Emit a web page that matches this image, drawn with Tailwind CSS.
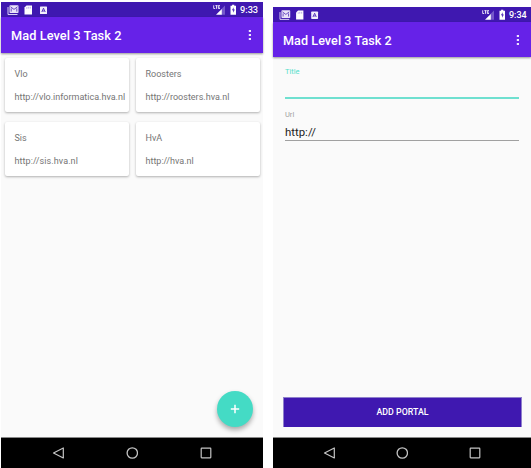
<!DOCTYPE html>
<html lang="en">
<head>
<meta charset="utf-8">
<title>Mad Level 3 Task 2</title>
<script src="https://cdn.jsdelivr.net/npm/@tailwindcss/browser@4"></script>
</head>
<body class="bg-white font-['Roboto',sans-serif] w-[531px] h-[468px] overflow-hidden">
<svg class="hidden">
  <symbol id="notif" viewBox="0 0 42 12">
    <path d="M1 3v7.500h9.500" fill="none" stroke="#d9cff3" stroke-width="1"/>
    <rect x="2.500" y="1.200" width="9" height="7.800" rx=".8" fill="#e9e3f8"/>
    <path d="M3.500 2.800l3.500 2.600 3.500-2.600M4.200 7.600V4.400M9.800 7.600V4.400" fill="none" stroke="#4a25b5" stroke-width=".8"/>
    <path d="M19.500 1.500h5.500v9h-7.500v-7z" fill="#fff"/>
    <path d="M19.700 3.300v1.400M21.300 2.800v1.800M23.200 2.800v1.800" stroke="#8f74d4" stroke-width=".6"/>
    <rect x="33" y="2.500" width="7" height="7.500" rx=".6" fill="#f2eefb"/>
    <path d="M34.800 8l1.700-3.800L38.200 8M35.500 7h2" fill="none" stroke="#4a25b5" stroke-width=".9"/>
  </symbol>
  <symbol id="signal" viewBox="0 0 24 12">
    <path d="M.7 1.300v3.200h1.500M2.400 1.600h2.200M3.500 1.600v3.200M7 1.600H5.300v2.900H7M5.300 3.100h1.500" fill="none" stroke="#f2eefb" stroke-width=".9"/>
    <path d="M12 1.500v9.300H8.500V5z" fill="#7558cb"/>
    <path d="M8.800 5v5.800H3z" fill="#fff"/>
    <path d="M17.500 1.700h1.600V.8h2.200v.9H23v9.100h-5.500z" fill="#fff"/>
    <path d="M20.600 3.200l-1.600 3h1.200v2.600l1.600-3.200h-1.200z" fill="#3f17b0"/>
  </symbol>
  <symbol id="back" viewBox="0 0 12 12"><path d="M11.300 1v10L1.500 6z" fill="none" stroke="#c4c4c4" stroke-width="1.200" stroke-linejoin="round"/></symbol>
  <symbol id="home" viewBox="0 0 12 12"><circle cx="6.300" cy="6" r="5.200" fill="none" stroke="#c4c4c4" stroke-width="1.300"/></symbol>
  <symbol id="recent" viewBox="0 0 12 12"><rect x="1.200" y="1.200" width="9.600" height="9.600" rx=".5" fill="none" stroke="#c4c4c4" stroke-width="1.200"/></symbol>
  <symbol id="more" viewBox="0 0 4 12"><path d="M.8.900h2.200v2.200H.8zM.8 4.900h2.200v2.200H.8zM.8 8.900h2.200v2.200H.8z" fill="#ece4fd"/></symbol>
</svg>
<div class="flex">
  <section class="ml-px mt-[2px] w-[262px] h-[466px] bg-[#fafafa] flex flex-col">
    <div class="h-[15px] shrink-0 bg-[#3f18b0] flex items-center pl-[6px] pr-[4px] text-white">
      <svg class="w-[42px] h-[12px]"><use href="#notif"/></svg>
      <svg class="w-[24px] h-[12px] ml-auto"><use href="#signal"/></svg>
      <span class="ml-[3px] w-[19px] text-[9.200px] leading-[15px] font-medium whitespace-nowrap">9:33</span>
    </div>
    <header class="h-[36px] shrink-0 bg-[#6622e8] flex items-center justify-between pl-[10px] pr-[11px] shadow-[0_1px_2px_rgba(0,0,0,.4)]">
      <h1 class="pt-[2px] text-[12.800px] leading-[16px] font-medium text-white whitespace-nowrap tracking-[.06px]">Mad Level 3 Task 2</h1>
      <svg class="w-[4px] h-[12px]"><use href="#more"/></svg>
    </header>
    <main class="relative grow grid grid-cols-[124px_124px] auto-rows-[54px] gap-x-[7px] gap-y-[10px] pt-[5px] pl-[3.500px] text-[9px] leading-[12px] text-[#757575] whitespace-nowrap">
      <article class="bg-white rounded-[2px] shadow-[0_1px_2.500px_rgba(0,0,0,.3)] pt-[10px] pl-[10px] flex flex-col gap-[11px]"><p>Vlo</p><p>http://vlo.informatica.hva.nl</p></article>
      <article class="bg-white rounded-[2px] shadow-[0_1px_2.500px_rgba(0,0,0,.3)] pt-[10px] pl-[10px] flex flex-col gap-[11px]"><p>Roosters</p><p>http://roosters.hva.nl</p></article>
      <article class="bg-white rounded-[2px] shadow-[0_1px_2.500px_rgba(0,0,0,.3)] pt-[10px] pl-[10px] flex flex-col gap-[11px]"><p>Sis</p><p class="tracking-[.08px]">http://sis.hva.nl</p></article>
      <article class="bg-white rounded-[2px] shadow-[0_1px_2.500px_rgba(0,0,0,.3)] pt-[10px] pl-[10px] flex flex-col gap-[11px]"><p>HvA</p><p>http://hva.nl</p></article>
      <button class="absolute right-[10px] bottom-[10px] size-[36px] rounded-full bg-[#44dbc5] shadow-[0_3px_5px_rgba(0,0,0,.32)] flex items-center justify-center" aria-label="Add">
        <svg class="size-[10px]" viewBox="0 0 10 10"><path d="M5 .8v8.400M.8 5h8.400" stroke="#fff" stroke-width="1.500"/></svg>
      </button>
    </main>
    <nav class="h-[31px] shrink-0 bg-black border-t border-[#888] flex items-center justify-between pl-[51px] pr-[51px]">
      <svg class="size-[12px]"><use href="#back"/></svg>
      <svg class="size-[12px]"><use href="#home"/></svg>
      <svg class="size-[12px]"><use href="#recent"/></svg>
    </nav>
  </section>
  <section class="ml-[10px] mt-[7px] w-[258px] h-[461px] bg-[#fafafa] flex flex-col">
    <div class="h-[15px] shrink-0 bg-[#3f18b0] flex items-center pl-[6px] pr-[4px] text-white">
      <svg class="w-[41px] h-[12px]"><use href="#notif"/></svg>
      <svg class="w-[24px] h-[12px] ml-auto"><use href="#signal"/></svg>
      <span class="pt-px ml-[3px] w-[18px] text-[9px] leading-[15px] font-medium whitespace-nowrap">9:34</span>
    </div>
    <header class="h-[35px] shrink-0 bg-[#6622e8] flex items-center justify-between pl-[10px] pr-[11px] shadow-[0_1px_2px_rgba(0,0,0,.4)]">
      <h1 class="pt-[2px] text-[12.600px] leading-[16px] font-medium text-white whitespace-nowrap tracking-[.06px]">Mad Level 3 Task 2</h1>
      <svg class="w-[4px] h-[12px]"><use href="#more"/></svg>
    </header>
    <main class="grow flex flex-col px-[12px] pt-[10px]">
      <label class="text-[7.500px] leading-[10px] text-[#55dfcb]">Title</label>
      <div class="h-[22px] border-b-2 border-[#6fe0d0]"></div>
      <label class="mt-[11px] text-[7.500px] leading-[10px] text-[#a0a0a0]">Url</label>
      <div class="h-[21px] border-b border-[#a0a0a0] pt-[5px] text-[11.400px] leading-[14px] text-[#222]">http://</div>
      <button class="mt-auto mb-[10px] -ml-[2px] -mr-[3px] h-[30px] bg-[#3f18b0] border border-b-0 border-[#8f80cc] pt-px text-white text-[8.800px] font-medium">ADD PORTAL</button>
    </main>
    <nav class="h-[31px] shrink-0 bg-black border-t border-[#888] flex items-center justify-between pl-[50px] pr-[50px]">
      <svg class="size-[12px]"><use href="#back"/></svg>
      <svg class="size-[12px]"><use href="#home"/></svg>
      <svg class="size-[12px]"><use href="#recent"/></svg>
    </nav>
  </section>
</div>
</body>
</html>
